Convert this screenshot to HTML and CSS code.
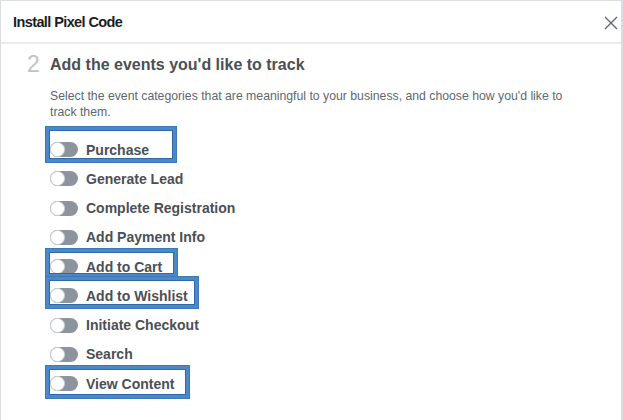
FILE: index.html
```html
<!DOCTYPE html>
<html lang="en">
<head>
    <meta charset="UTF-8">
    <meta name="viewport" content="width=device-width, initial-scale=1.0">
    <title>Install Pixel Code</title>
    <link rel="stylesheet" href="styles.css">
</head>
<body>
    <div class="dialog">
        <div class="header">
            <span class="title">Install Pixel Code</span>
            <button class="close" aria-label="Close">
                <svg width="14" height="14" viewBox="0 0 14 14">
                    <path d="M1 1 L13 13 M13 1 L1 13" stroke="#606770" stroke-width="1.4" fill="none"/>
                </svg>
            </button>
        </div>

        <div class="body">
            <div class="step">
                <span class="step-num">2</span>
                <h2 class="step-title">Add the events you'd like to track</h2>
            </div>

            <div class="content">
                <p class="desc">Select the event categories that are meaningful to your business, and choose how you'd like to track them.</p>

                <ul class="events">
                    <li class="event mark mark-purchase"><span class="toggle"></span>Purchase</li>
                    <li class="event"><span class="toggle"></span>Generate Lead</li>
                    <li class="event"><span class="toggle"></span>Complete Registration</li>
                    <li class="event"><span class="toggle"></span>Add Payment Info</li>
                    <li class="event mark mark-cart"><span class="toggle"></span>Add to Cart</li>
                    <li class="event mark mark-wishlist"><span class="toggle"></span>Add to Wishlist</li>
                    <li class="event"><span class="toggle"></span>Initiate Checkout</li>
                    <li class="event"><span class="toggle"></span>Search</li>
                    <li class="event mark mark-view"><span class="toggle"></span>View Content</li>
                </ul>
            </div>
        </div>
    </div>
</body>
</html>
```

FILE: styles.css
```css
html, body {
    margin: 0;
    height: 100%;
    background: #fff;
}

body {
    font-family: "Liberation Sans", Arial, sans-serif;
    color: #4b4f56;
}

.dialog {
    box-sizing: border-box;
    height: 100%;
    border-top: 1px solid #dadde1;
    border-left: 1px solid #dadde1;
    border-right: 2px solid #dadde1;
}

.header {
    display: flex;
    align-items: center;
    justify-content: space-between;
    height: 41px;
    padding: 0 2px 0 12px;
    border-bottom: 2px solid #e9ebee;
}

.title {
    font-size: 14.5px;
    font-weight: bold;
    letter-spacing: -0.6px;
    color: #1c1e21;
    margin-top: 1px;
}

.close {
    border: none;
    background: none;
    padding: 0;
    width: 16px;
    height: 16px;
    display: flex;
    align-items: center;
    justify-content: center;
    margin-top: 2px;
}

.body {
    padding: 7px 0 0 26px;
}

.step {
    display: flex;
    align-items: center;
}

.step-num {
    width: 23px;
    font-size: 23px;
    font-weight: 300;
    color: #bec2c9;
}

.step-title {
    margin: 0;
    font-size: 16px;
    font-weight: bold;
    color: #4b4f56;
}

.content {
    padding-left: 23px;
}

.desc {
    margin: 10px 0 15px;
    font-size: 12.25px;
    line-height: 16px;
    color: #606770;
    max-width: 530px;
}

.events {
    list-style: none;
    margin: 0;
    padding: 0;
}

.event {
    position: relative;
    display: flex;
    align-items: center;
    height: 29.25px;
    font-size: 14px;
    font-weight: bold;
    color: #4b4f56;
}

.toggle {
    position: relative;
    width: 28px;
    height: 15px;
    margin-right: 8px;
    border-radius: 8px;
    background: #8d949e;
}

.toggle::before {
    content: "";
    position: absolute;
    left: 0;
    top: 0;
    box-sizing: border-box;
    width: 15px;
    height: 15px;
    border-radius: 50%;
    background: #fff;
    border: 1px solid #ccd0d5;
}

/* blue annotation boxes drawn over the list */
.mark::after {
    content: "";
    position: absolute;
    left: -4px;
    border: 3px solid #4a88c8;
    box-shadow: inset 0 0 0 1px #2f6aa6, 0 0 0 1px #3c79b8;
    pointer-events: none;
}

.mark-purchase::after { top: -8px; bottom: 2px; width: 124px; }
.mark-cart::after { top: -3px; bottom: 4px; width: 125px; }
.mark-wishlist::after { top: -4px; bottom: 3px; width: 146px; }
.mark-view::after { top: -3px; bottom: 0; width: 137px; }
```
